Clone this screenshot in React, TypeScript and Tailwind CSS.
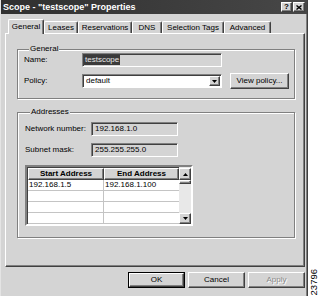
import React from 'react';

const raised =
  'border border-t-white border-l-white border-r-[#404040] border-b-[#404040] shadow-[inset_-1px_-1px_0_#808080] bg-[#d4d4d4]';
const sunken =
  'border border-t-[#808080] border-l-[#808080] border-r-white border-b-white shadow-[inset_1px_1px_0_#404040]';

function Tri({ up = false }: { up?: boolean }) {
  return (
    <svg width="5" height="3" viewBox="0 0 5 3" className="block">
      <path d={up ? 'M2.5 0L5 3H0z' : 'M0 0h5L2.5 3z'} fill="#000" />
    </svg>
  );
}

function TitleBar() {
  return (
    <div className="flex h-[14px] items-center justify-between bg-linear-to-r from-[#303030] to-[#474747] pl-[2px] pr-[2px]">
      <span className="text-[9px] font-bold leading-none text-white">Scope - "testscope" Properties</span>
      <div className="flex gap-[1px]">
        <div className={`${raised} flex h-[10px] w-[11px] items-center justify-center`}>
          <span className="text-[8px] font-bold leading-none">?</span>
        </div>
        <div className={`${raised} flex h-[10px] w-[12px] items-center justify-center`}>
          <svg width="6" height="5" viewBox="0 0 6 5">
            <path d="M0.5 0.5L5.5 4.5M5.5 0.5L0.5 4.5" stroke="#000" strokeWidth="1.4" />
          </svg>
        </div>
      </div>
    </div>
  );
}

const tabs = [
  { label: 'General', w: 'w-[36px]' },
  { label: 'Leases', w: 'w-[34px]' },
  { label: 'Reservations', w: 'w-[54px]' },
  { label: 'DNS', w: 'w-[30px]' },
  { label: 'Selection Tags', w: 'w-[62px]' },
  { label: 'Advanced', w: 'w-[47px]' },
];

function Tabs() {
  return (
    <div className="ml-[3px] flex items-end">
      {tabs.map((t, i) =>
        i === 0 ? (
          <div
            key={t.label}
            className={`${t.w} relative z-10 mb-[-1px] flex h-[15px] items-center justify-center rounded-t-[2px] border-l border-t border-r border-l-white border-t-white border-r-[#404040] bg-[#d4d4d4] shadow-[inset_-1px_0_0_#808080]`}
          >
            <span className="leading-none">{t.label}</span>
          </div>
        ) : (
          <div
            key={t.label}
            className={`${t.w} flex h-[12px] items-center justify-center rounded-t-[2px] border-l border-t border-r border-l-white border-t-white border-r-[#404040] shadow-[inset_-1px_0_0_#808080]`}
          >
            <span className="leading-none">{t.label}</span>
          </div>
        ),
      )}
    </div>
  );
}

function Group({ title, className = '', children }: { title: string; className?: string; children: React.ReactNode }) {
  return (
    <fieldset
      className={`border border-[#808080] shadow-[inset_1px_1px_0_#fff,1px_1px_0_#fff] ${className}`}
    >
      <legend className="ml-[5px] h-[8px] bg-[#d4d4d4] px-[1px] leading-[8px]">{title}</legend>
      {children}
    </fieldset>
  );
}

function Field({ value, w }: { value: string; w: string }) {
  return (
    <div className={`${sunken} ${w} flex h-[14px] items-center bg-[#d4d4d4] pl-[3px]`}>
      <span className="leading-none">{value}</span>
    </div>
  );
}

function AddressTable() {
  const rows = [
    ['192.168.1.5', '192.168.1.100'],
    ['', ''],
    ['', ''],
    ['', ''],
  ];
  return (
    <div
      className={`mt-[8px] flex h-[61px] w-[168px] border-2 border-t-[#808080] border-l-[#808080] border-r-white border-b-white bg-white shadow-[inset_1px_1px_0_#404040]`}
    >
      <div className="flex flex-1 flex-col overflow-hidden pl-[1px] pt-[1px]">
        <div className="grid h-[12px] grid-cols-[76px_75px]">
          <div className={`${raised} flex items-center justify-center font-bold`}>
            <span className="leading-none">Start Address</span>
          </div>
          <div className={`${raised} flex items-center justify-center font-bold`}>
            <span className="leading-none">End Address</span>
          </div>
        </div>
        {rows.map((r, i) => (
          <div key={i} className="grid h-[11px] shrink-0 grid-cols-[76px_75px] border-b border-[#c4c4c4]">
            <div className="flex items-center border-r border-[#c4c4c4] pl-[1px]">
              <span className="leading-none">{r[0]}</span>
            </div>
            <div className="flex items-center pl-[1px]">
              <span className="leading-none">{r[1]}</span>
            </div>
          </div>
        ))}
      </div>
      <div className="flex w-[12px] flex-col bg-[#e8e8e8] pt-[1px]">
        <div className={`${raised} flex h-[12px] items-center justify-center`}>
          <Tri up />
        </div>
        <div className={`${raised} h-[4px]`} />
        <div className="flex-1" />
        <div className={`${raised} flex h-[11px] items-center justify-center`}>
          <Tri />
        </div>
      </div>
    </div>
  );
}

function Panel() {
  return (
    <div className="flex h-[234px] flex-col border border-t-white border-l-white border-r-[#404040] border-b-[#404040] pl-[11px] pr-[9px] pt-[11px] shadow-[inset_-1px_-1px_0_#808080]">
      <Group title="General" className="pb-[9px] pl-[6px]">
        <div className="flex h-[14px] items-center">
          <span className="w-[58px] leading-none">Name:</span>
          <div className={`${sunken} flex h-[14px] w-[140px] items-center bg-[#d4d4d4] pl-[1px]`}>
            <span className="bg-[#3a3a3a] px-[1px] py-[1px] leading-none text-[#e8e8e8]">testscope</span>
          </div>
        </div>
        <div className="mt-[6px] flex h-[16px] items-center">
          <span className="w-[58px] leading-none">Policy:</span>
          <div className={`${sunken} flex h-[14px] w-[140px] items-center justify-between bg-white pl-[3px] pr-[1px]`}>
            <span className="leading-none">default</span>
            <div className={`${raised} flex h-[10px] w-[11px] items-center justify-center`}>
              <Tri />
            </div>
          </div>
          <div className={`${raised} ml-[8px] flex h-[16px] w-[59px] items-center justify-center`}>
            <span className="leading-none">View policy...</span>
          </div>
        </div>
      </Group>
      <Group title="Addresses" className="mt-[9px] pb-[11px] pl-[7px]">
        <div className="mt-[6px] flex items-center">
          <span className="w-[66px] leading-none">Network number:</span>
          <Field value="192.168.1.0" w="w-[87px]" />
        </div>
        <div className="mt-[7px] flex items-center">
          <span className="w-[66px] leading-none">Subnet mask:</span>
          <Field value="255.255.255.0" w="w-[87px]" />
        </div>
        <AddressTable />
      </Group>
    </div>
  );
}

function Buttons() {
  return (
    <div className="mt-[5px] flex justify-end gap-[3px]">
      <div className="border border-black">
        <div className={`${raised} flex h-[14px] w-[55px] items-center justify-center`}>
          <span className="leading-none">OK</span>
        </div>
      </div>
      <div className={`${raised} flex h-[16px] w-[57px] items-center justify-center`}>
        <span className="leading-none">Cancel</span>
      </div>
      <div className={`${raised} flex h-[16px] w-[57px] items-center justify-center`}>
        <span className="leading-none text-[#8a8a8a] [text-shadow:1px_1px_0_#fff]">Apply</span>
      </div>
    </div>
  );
}

export default function App() {
  return (
    <div className="flex h-[296px] w-[320px] bg-white font-['Liberation_Sans',Arial,sans-serif] text-[8px] text-black">
      <div className="flex h-full w-[308px] flex-col border-l border-r border-l-[#e4e4e4] border-r-[#404040] bg-[#d4d4d4] shadow-[inset_-1px_0_0_#808080]">
        <TitleBar />
        <div className="flex flex-1 flex-col pl-[4px] pr-[2px] pt-[5px]">
          <Tabs />
          <Panel />
          <Buttons />
        </div>
      </div>
      <div className="flex flex-1 items-end justify-center pb-[1px]">
        <span className="rotate-180 text-[9.5px] leading-none [writing-mode:vertical-rl]">23796</span>
      </div>
    </div>
  );
}
